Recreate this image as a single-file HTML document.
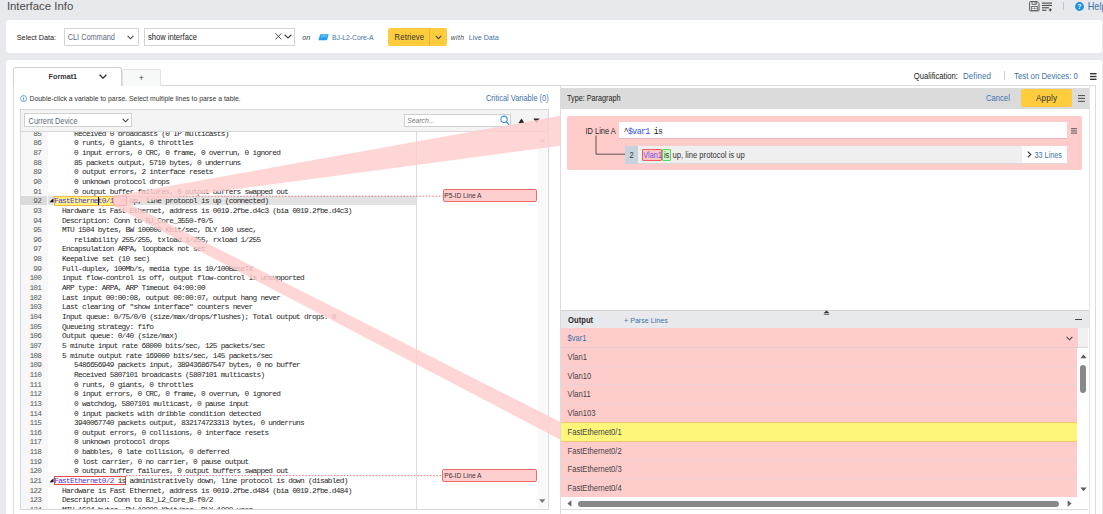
<!DOCTYPE html>
<html><head><meta charset="utf-8"><title>Interface Info</title><style>
*{box-sizing:border-box}
html,body{margin:0;padding:0}
body{width:1103px;height:514px;overflow:hidden;position:relative;background:#e8e9ed;font-family:"Liberation Sans",sans-serif;color:#333}
.a{position:absolute}
.t{position:absolute;white-space:pre;line-height:1}
.lnk{color:#3d72a8}
.mono{font-family:"Liberation Mono",monospace;font-size:7.8px;letter-spacing:-0.713px;white-space:pre;line-height:9.65px}
</style></head>
<body>
<div class="t" style="left:6.90px;top:0.78px;font-size:11.36px;letter-spacing:0.000px;color:#4a4a4a;">Interface Info</div>
<svg class="a" style="left:1028.5px;top:1px" width="11" height="10.5" viewBox="0 0 11 10.5"><path d="M1.3 0.6H8.2L10 2.4V9.2Q10 9.9 9.3 9.9H1.3Q0.6 9.9 0.6 9.2V1.3Q0.6 0.6 1.3 0.6z" fill="none" stroke="#505050" stroke-width="0.95"/><path d="M3 0.8V3.3H7.4V0.8" fill="none" stroke="#505050" stroke-width="0.8"/><rect x="5.6" y="1.3" width="0.9" height="1.3" fill="#505050"/><rect x="2.7" y="5.4" width="5.6" height="4.2" fill="#fafafa" stroke="#505050" stroke-width="0.8"/><path d="M5.5 5.6V9.6M3 7.5H8" stroke="#777" stroke-width="0.6"/></svg>
<svg class="a" style="left:1042px;top:1.5px" width="11" height="10" viewBox="0 0 11 10"><rect x="0" y="0.6" width="10" height="1.0" fill="#3a3a3a"/><rect x="0" y="2.9" width="10" height="1.0" fill="#3a3a3a"/><rect x="0" y="5.3" width="7" height="1.0" fill="#3a3a3a"/><rect x="0" y="7.7" width="4.5" height="1.0" fill="#3a3a3a"/><path d="M8.3 6.3v3.2M6.7 7.9h3.2" stroke="#3a3a3a" stroke-width="0.9"/></svg>
<div class="a" style="left:1063.20px;top:2.30px;width:0.70px;height:7.30px;background:#c4c4c4"></div>
<svg class="a" style="left:1075px;top:1.5px" width="9" height="9" viewBox="0 0 9 9"><circle cx="4.5" cy="4.5" r="4.4" fill="#1a8fe0"/><text x="4.5" y="7.3" font-size="7" font-family="Liberation Sans" font-weight="bold" fill="#fff" text-anchor="middle">?</text></svg>
<div class="t" style="left:1087.70px;top:2.51px;font-size:9.20px;letter-spacing:0.000px;color:#3d72a8;transform:scaleY(1.12);transform-origin:0 7.79px;">Help</div>
<div class="a" style="left:6.00px;top:20.00px;width:1096.00px;height:33.00px;background:#fff;border-radius:3px"></div>
<div class="t" style="left:16.80px;top:34.48px;font-size:7.23px;letter-spacing:0.000px;color:#222;transform:scaleY(1.12);transform-origin:0 6.12px;">Select Data:</div>
<div class="a" style="left:64.00px;top:28.00px;width:74.50px;height:18.00px;background:#fff;border:1px solid #d4d4d4;border-radius:1px"></div>
<div class="t" style="left:67.70px;top:34.39px;font-size:7.34px;letter-spacing:0.000px;color:#5b6b7c;transform:scaleY(1.12);transform-origin:0 6.21px;">CLI Command</div>
<svg class="a" style="left:127px;top:35px" width="7" height="5" viewBox="0 0 7 5"><path d="M0.6 0.8L3.5 3.8L6.4 0.8" fill="none" stroke="#444" stroke-width="1.1"/></svg>
<div class="a" style="left:144.40px;top:27.60px;width:150.20px;height:18.00px;background:#fff;border:1px solid #d4d4d4"></div>
<div class="t" style="left:148.00px;top:33.97px;font-size:7.60px;letter-spacing:0.000px;color:#222;transform:scaleY(1.12);transform-origin:0 6.43px;">show interface</div>
<svg class="a" style="left:275.3px;top:33.4px" width="7" height="7" viewBox="0 0 7 7"><path d="M0.5 0.4L6.3 6.4M6.3 0.4L0.5 6.4" fill="none" stroke="#333" stroke-width="0.85"/></svg>
<svg class="a" style="left:284.3px;top:34px" width="8" height="5" viewBox="0 0 8 5"><path d="M0.6 0.8L4 4L7.4 0.8" fill="none" stroke="#444" stroke-width="1.2"/></svg>
<div class="t" style="left:302.20px;top:33.71px;font-size:7.19px;letter-spacing:0.000px;color:#444;transform:scaleY(1.12);transform-origin:0 6.09px;font-style:italic">on</div>
<svg class="a" style="left:317.8px;top:34.2px" width="11" height="6.5" viewBox="0 0 11 6.5"><path d="M3 0.3H10.2Q10.9 0.3 10.6 1.1L9.2 5.4Q8.9 6.2 8.1 6.2H1Q0.2 6.2 0.5 5.4L2 1.1Q2.3 0.3 3 0.3z" fill="#27a0ea"/><path d="M3.2 1.2H9.4L8.7 3.3H2.5z" fill="#5cbcf2"/></svg>
<div class="t" style="left:332.00px;top:34.83px;font-size:6.82px;letter-spacing:0.000px;color:#3d72a8;transform:scaleY(1.12);transform-origin:0 5.77px;">BJ-L2-Core-A</div>
<div class="a" style="left:388.30px;top:27.70px;width:58.50px;height:18.10px;background:#ffcc3e;border-radius:2px"></div>
<div class="a" style="left:429.30px;top:27.70px;width:0.80px;height:18.10px;background:#e9b23a"></div>
<div class="t" style="left:394.60px;top:34.12px;font-size:7.66px;letter-spacing:0.126px;color:#333;transform:scaleY(1.12);transform-origin:0 6.48px;">Retrieve</div>
<svg class="a" style="left:434.5px;top:35px" width="7" height="5" viewBox="0 0 7 5"><path d="M0.8 0.8L3.5 3.6L6.2 0.8" fill="none" stroke="#444" stroke-width="1.1"/></svg>
<div class="t" style="left:450.80px;top:34.82px;font-size:6.83px;letter-spacing:0.352px;color:#444;transform:scaleY(1.12);transform-origin:0 5.78px;font-style:italic">with</div>
<div class="t" style="left:468.70px;top:34.57px;font-size:7.12px;letter-spacing:0.000px;color:#3d72a8;transform:scaleY(1.12);transform-origin:0 6.03px;">Live Data</div>
<div class="a" style="left:6.00px;top:60.40px;width:1096.00px;height:469.60px;background:#fff;border-radius:3px"></div>
<div class="a" style="left:13.20px;top:85.40px;width:1082.80px;height:0.80px;background:#d8d8d8"></div>
<div class="a" style="left:13.20px;top:85.40px;width:0.80px;height:444.60px;background:#dcdcdc"></div>
<div class="a" style="left:122.00px;top:69.20px;width:39.00px;height:17.00px;background:#f7f8f8;border:1px solid #e2e2e2;border-bottom:none;border-radius:2px 2px 0 0"></div>
<div class="t" style="left:138.90px;top:74.93px;font-size:8.00px;letter-spacing:0.000px;color:#333;transform:scaleY(1.12);transform-origin:0 6.77px;">+</div>
<div class="a" style="left:13.20px;top:66.90px;width:108.40px;height:19.50px;background:#fff;border:1px solid #d0d0d0;border-bottom:none;border-radius:3px 3px 0 0"></div>
<div class="t" style="left:48.60px;top:73.38px;font-size:7.22px;letter-spacing:0.000px;color:#333;transform:scaleY(1.12);transform-origin:0 6.12px;font-weight:bold">Format1</div>
<svg class="a" style="left:99px;top:73.7px" width="8" height="5" viewBox="0 0 8 5"><path d="M0.6 0.8L4 4.2L7.4 0.8" fill="none" stroke="#333" stroke-width="1.3"/></svg>
<div class="t" style="left:913.80px;top:73.33px;font-size:7.65px;letter-spacing:0.000px;color:#222;transform:scaleY(1.12);transform-origin:0 6.47px;">Qualification:</div>
<div class="t" style="left:963.00px;top:73.13px;font-size:7.88px;letter-spacing:0.140px;color:#3d72a8;transform:scaleY(1.12);transform-origin:0 6.67px;">Defined</div>
<div class="a" style="left:1004.20px;top:70.80px;width:0.80px;height:9.60px;background:#d0d0d0"></div>
<div class="t" style="left:1014.00px;top:73.17px;font-size:7.83px;letter-spacing:0.000px;color:#3d72a8;transform:scaleY(1.12);transform-origin:0 6.63px;">Test on Devices: 0</div>
<svg class="a" style="left:1089.5px;top:73px" width="7" height="7" viewBox="0 0 7 7"><rect x="0" y="0" width="6.5" height="1.4" fill="#333"/><rect x="0" y="2.8" width="6.5" height="1.4" fill="#333"/><rect x="0" y="5.6" width="6.5" height="1.4" fill="#333"/></svg>
<svg class="a" style="left:19.6px;top:94.6px" width="7.2" height="7.2" viewBox="0 0 8 8"><circle cx="4" cy="4" r="3.4" fill="none" stroke="#3a8fd6" stroke-width="0.9"/><rect x="3.55" y="3.3" width="0.9" height="2.8" fill="#3a8fd6"/><rect x="3.55" y="1.9" width="0.9" height="0.9" fill="#3a8fd6"/></svg>
<div class="t" style="left:29.50px;top:95.88px;font-size:6.87px;letter-spacing:0.000px;color:#333;transform:scaleY(1.12);transform-origin:0 5.82px;">Double-click a variable to parse. Select multiple lines to parse a table.</div>
<div class="t" style="left:486.00px;top:95.49px;font-size:7.45px;letter-spacing:0.000px;color:#3d72a8;transform:scaleY(1.12);transform-origin:0 6.31px;">Critical Variable (0)</div>
<div class="a" style="left:20.00px;top:109.00px;width:529.00px;height:401.00px;background:#fff;border:1px solid #d8d8d8"></div>
<div class="a" style="left:20.00px;top:109.00px;width:529.00px;height:23.30px;background:#f4f4f4;border:1px solid #d8d8d8"></div>
<div class="a" style="left:24.20px;top:113.20px;width:108.30px;height:14.20px;background:#fff;border:1px solid #d0d0d0"></div>
<div class="t" style="left:28.60px;top:118.39px;font-size:7.33px;letter-spacing:0.000px;color:#5b6b7c;transform:scaleY(1.12);transform-origin:0 6.21px;">Current Device</div>
<svg class="a" style="left:121.5px;top:118px" width="7" height="5" viewBox="0 0 7 5"><path d="M0.6 0.8L3.5 3.8L6.4 0.8" fill="none" stroke="#444" stroke-width="1.1"/></svg>
<div class="a" style="left:403.50px;top:113.50px;width:107.90px;height:13.90px;background:#fff;border:1px solid #d0d0d0"></div>
<div class="t" style="left:407.30px;top:117.99px;font-size:6.75px;letter-spacing:0.000px;color:#777;transform:scaleY(1.12);transform-origin:0 5.71px;font-style:italic">Search...</div>
<svg class="a" style="left:499.5px;top:114.5px" width="10" height="11" viewBox="0 0 10 11"><circle cx="4" cy="4.3" r="3.2" fill="none" stroke="#3a8fd6" stroke-width="1.1"/><path d="M6.3 6.8L9.2 9.9" stroke="#3a8fd6" stroke-width="1.3"/></svg>
<svg class="a" style="left:518px;top:117.5px" width="7" height="6" viewBox="0 0 7 6"><path d="M3.5 0.6L6.6 5.3H0.4z" fill="#222"/></svg>
<svg class="a" style="left:532.7px;top:117.5px" width="7" height="6" viewBox="0 0 7 6"><path d="M0.4 0.6H6.6L3.5 5.3z" fill="#222"/></svg>
<div class="a" style="left:21px;top:132.3px;width:526.4px;height:376.7px;overflow:hidden">
<div class="a" style="left:0;top:0;width:26.7px;height:400px;background:#f7f7f7"></div>
<div class="a" style="left:0;top:63.85px;width:25.9px;height:8.8px;background:#dadada"></div>
<div class="a" style="left:26.7px;top:63.85px;width:368.8px;height:8.8px;background:#e2e2e2"></div>
<div class="a" style="left:395px;top:0;width:1px;height:400px;background:#dcdcdc"></div>
<div class="a" style="left:516.5px;top:0;width:9.9px;height:400px;background:#f9f9f9"></div>
</div>
<div class="a" style="left:54.00px;top:195.95px;width:59.80px;height:9.65px;background:#fdf57a;border:1px solid #f2b450"></div>
<div class="a" style="left:54.20px;top:475.50px;width:71.40px;height:9.65px;border:1px solid #e8474b"></div>
<svg class="a" style="left:0;top:0" width="1103" height="514"><path d="M125 196.25H442.5M126 475.60H442.5" stroke="#ea7070" stroke-width="0.9" stroke-dasharray="1.6 1.6"/></svg>
<div class="a" style="left:21px;top:132.3px;width:526.4px;height:376.7px;overflow:hidden">
<div class="mono a" style="left:12.37px;top:-2.60px;color:#5a5a5a;-webkit-text-stroke:0">85</div>
<div class="mono a" style="left:33.20px;top:-2.60px;color:#262626">     Received 0 broadcasts (0 IP multicasts)</div>
<div class="mono a" style="left:12.37px;top:7.05px;color:#5a5a5a;-webkit-text-stroke:0">86</div>
<div class="mono a" style="left:33.20px;top:7.05px;color:#262626">     0 runts, 0 giants, 0 throttles</div>
<div class="mono a" style="left:12.37px;top:16.70px;color:#5a5a5a;-webkit-text-stroke:0">87</div>
<div class="mono a" style="left:33.20px;top:16.70px;color:#262626">     0 input errors, 0 CRC, 0 frame, 0 overrun, 0 ignored</div>
<div class="mono a" style="left:12.37px;top:26.35px;color:#5a5a5a;-webkit-text-stroke:0">88</div>
<div class="mono a" style="left:33.20px;top:26.35px;color:#262626">     85 packets output, 5710 bytes, 0 underruns</div>
<div class="mono a" style="left:12.37px;top:36.00px;color:#5a5a5a;-webkit-text-stroke:0">89</div>
<div class="mono a" style="left:33.20px;top:36.00px;color:#262626">     0 output errors, 2 interface resets</div>
<div class="mono a" style="left:12.37px;top:45.65px;color:#5a5a5a;-webkit-text-stroke:0">90</div>
<div class="mono a" style="left:33.20px;top:45.65px;color:#262626">     0 unknown protocol drops</div>
<div class="mono a" style="left:12.37px;top:55.30px;color:#5a5a5a;-webkit-text-stroke:0">91</div>
<div class="mono a" style="left:33.20px;top:55.30px;color:#262626">     0 output buffer failures, 0 output buffers swapped out</div>
<div class="mono a" style="left:12.37px;top:64.95px;color:#5a5a5a;-webkit-text-stroke:0">92</div>
<div class="mono a" style="left:33.20px;top:64.95px;color:#262626"><span style="color:#5535e0">FastEthernet0/1</span> is up, line protocol is up (connected)</div>
<svg class="a" style="left:27.80px;top:65.75px" width="5" height="5" viewBox="0 0 5 5"><path d="M4.5 0.3V4.3H0.3z" fill="#111"/></svg>
<div class="mono a" style="left:12.37px;top:74.60px;color:#5a5a5a;-webkit-text-stroke:0">93</div>
<div class="mono a" style="left:33.20px;top:74.60px;color:#262626">  Hardware is Fast Ethernet, address is 0019.2fbe.d4c3 (bia 0019.2fbe.d4c3)</div>
<div class="mono a" style="left:12.37px;top:84.25px;color:#5a5a5a;-webkit-text-stroke:0">94</div>
<div class="mono a" style="left:33.20px;top:84.25px;color:#262626">  Description: Conn to BJ_Core_3550-f0/5</div>
<div class="mono a" style="left:12.37px;top:93.90px;color:#5a5a5a;-webkit-text-stroke:0">95</div>
<div class="mono a" style="left:33.20px;top:93.90px;color:#262626">  MTU 1504 bytes, BW 100000 Kbit/sec, DLY 100 usec,</div>
<div class="mono a" style="left:12.37px;top:103.55px;color:#5a5a5a;-webkit-text-stroke:0">96</div>
<div class="mono a" style="left:33.20px;top:103.55px;color:#262626">     reliability 255/255, txload 1/255, rxload 1/255</div>
<div class="mono a" style="left:12.37px;top:113.20px;color:#5a5a5a;-webkit-text-stroke:0">97</div>
<div class="mono a" style="left:33.20px;top:113.20px;color:#262626">  Encapsulation ARPA, loopback not set</div>
<div class="mono a" style="left:12.37px;top:122.85px;color:#5a5a5a;-webkit-text-stroke:0">98</div>
<div class="mono a" style="left:33.20px;top:122.85px;color:#262626">  Keepalive set (10 sec)</div>
<div class="mono a" style="left:12.37px;top:132.50px;color:#5a5a5a;-webkit-text-stroke:0">99</div>
<div class="mono a" style="left:33.20px;top:132.50px;color:#262626">  Full-duplex, 100Mb/s, media type is 10/100BaseTX</div>
<div class="mono a" style="left:8.40px;top:142.15px;color:#5a5a5a;-webkit-text-stroke:0">100</div>
<div class="mono a" style="left:33.20px;top:142.15px;color:#262626">  input flow-control is off, output flow-control is unsupported</div>
<div class="mono a" style="left:8.40px;top:151.80px;color:#5a5a5a;-webkit-text-stroke:0">101</div>
<div class="mono a" style="left:33.20px;top:151.80px;color:#262626">  ARP type: ARPA, ARP Timeout 04:00:00</div>
<div class="mono a" style="left:8.40px;top:161.45px;color:#5a5a5a;-webkit-text-stroke:0">102</div>
<div class="mono a" style="left:33.20px;top:161.45px;color:#262626">  Last input 00:00:08, output 00:00:07, output hang never</div>
<div class="mono a" style="left:8.40px;top:171.10px;color:#5a5a5a;-webkit-text-stroke:0">103</div>
<div class="mono a" style="left:33.20px;top:171.10px;color:#262626">  Last clearing of &quot;show interface&quot; counters never</div>
<div class="mono a" style="left:8.40px;top:180.75px;color:#5a5a5a;-webkit-text-stroke:0">104</div>
<div class="mono a" style="left:33.20px;top:180.75px;color:#262626">  Input queue: 0/75/0/0 (size/max/drops/flushes); Total output drops: 0</div>
<div class="mono a" style="left:8.40px;top:190.40px;color:#5a5a5a;-webkit-text-stroke:0">105</div>
<div class="mono a" style="left:33.20px;top:190.40px;color:#262626">  Queueing strategy: fifo</div>
<div class="mono a" style="left:8.40px;top:200.05px;color:#5a5a5a;-webkit-text-stroke:0">106</div>
<div class="mono a" style="left:33.20px;top:200.05px;color:#262626">  Output queue: 0/40 (size/max)</div>
<div class="mono a" style="left:8.40px;top:209.70px;color:#5a5a5a;-webkit-text-stroke:0">107</div>
<div class="mono a" style="left:33.20px;top:209.70px;color:#262626">  5 minute input rate 68000 bits/sec, 125 packets/sec</div>
<div class="mono a" style="left:8.40px;top:219.35px;color:#5a5a5a;-webkit-text-stroke:0">108</div>
<div class="mono a" style="left:33.20px;top:219.35px;color:#262626">  5 minute output rate 169000 bits/sec, 145 packets/sec</div>
<div class="mono a" style="left:8.40px;top:229.00px;color:#5a5a5a;-webkit-text-stroke:0">109</div>
<div class="mono a" style="left:33.20px;top:229.00px;color:#262626">     5486656949 packets input, 389436867547 bytes, 0 no buffer</div>
<div class="mono a" style="left:8.40px;top:238.65px;color:#5a5a5a;-webkit-text-stroke:0">110</div>
<div class="mono a" style="left:33.20px;top:238.65px;color:#262626">     Received 5807101 broadcasts (5807101 multicasts)</div>
<div class="mono a" style="left:8.40px;top:248.30px;color:#5a5a5a;-webkit-text-stroke:0">111</div>
<div class="mono a" style="left:33.20px;top:248.30px;color:#262626">     0 runts, 0 giants, 0 throttles</div>
<div class="mono a" style="left:8.40px;top:257.95px;color:#5a5a5a;-webkit-text-stroke:0">112</div>
<div class="mono a" style="left:33.20px;top:257.95px;color:#262626">     0 input errors, 0 CRC, 0 frame, 0 overrun, 0 ignored</div>
<div class="mono a" style="left:8.40px;top:267.60px;color:#5a5a5a;-webkit-text-stroke:0">113</div>
<div class="mono a" style="left:33.20px;top:267.60px;color:#262626">     0 watchdog, 5807101 multicast, 0 pause input</div>
<div class="mono a" style="left:8.40px;top:277.25px;color:#5a5a5a;-webkit-text-stroke:0">114</div>
<div class="mono a" style="left:33.20px;top:277.25px;color:#262626">     0 input packets with dribble condition detected</div>
<div class="mono a" style="left:8.40px;top:286.90px;color:#5a5a5a;-webkit-text-stroke:0">115</div>
<div class="mono a" style="left:33.20px;top:286.90px;color:#262626">     3940067740 packets output, 832174723313 bytes, 0 underruns</div>
<div class="mono a" style="left:8.40px;top:296.55px;color:#5a5a5a;-webkit-text-stroke:0">116</div>
<div class="mono a" style="left:33.20px;top:296.55px;color:#262626">     0 output errors, 0 collisions, 0 interface resets</div>
<div class="mono a" style="left:8.40px;top:306.20px;color:#5a5a5a;-webkit-text-stroke:0">117</div>
<div class="mono a" style="left:33.20px;top:306.20px;color:#262626">     0 unknown protocol drops</div>
<div class="mono a" style="left:8.40px;top:315.85px;color:#5a5a5a;-webkit-text-stroke:0">118</div>
<div class="mono a" style="left:33.20px;top:315.85px;color:#262626">     0 babbles, 0 late collision, 0 deferred</div>
<div class="mono a" style="left:8.40px;top:325.50px;color:#5a5a5a;-webkit-text-stroke:0">119</div>
<div class="mono a" style="left:33.20px;top:325.50px;color:#262626">     0 lost carrier, 0 no carrier, 0 pause output</div>
<div class="mono a" style="left:8.40px;top:335.15px;color:#5a5a5a;-webkit-text-stroke:0">120</div>
<div class="mono a" style="left:33.20px;top:335.15px;color:#262626">     0 output buffer failures, 0 output buffers swapped out</div>
<div class="mono a" style="left:8.40px;top:344.80px;color:#5a5a5a;-webkit-text-stroke:0">121</div>
<div class="mono a" style="left:33.20px;top:344.80px;color:#262626"><span style="color:#5535e0">FastEthernet0/2</span> is administratively down, line protocol is down (disabled)</div>
<svg class="a" style="left:27.80px;top:345.60px" width="5" height="5" viewBox="0 0 5 5"><path d="M4.5 0.3V4.3H0.3z" fill="#111"/></svg>
<div class="mono a" style="left:8.40px;top:354.45px;color:#5a5a5a;-webkit-text-stroke:0">122</div>
<div class="mono a" style="left:33.20px;top:354.45px;color:#262626">  Hardware is Fast Ethernet, address is 0019.2fbe.d484 (bia 0019.2fbe.d484)</div>
<div class="mono a" style="left:8.40px;top:364.10px;color:#5a5a5a;-webkit-text-stroke:0">123</div>
<div class="mono a" style="left:33.20px;top:364.10px;color:#262626">  Description: Conn to BJ_L2_Core_B-f0/2</div>
<div class="mono a" style="left:8.40px;top:373.75px;color:#5a5a5a;-webkit-text-stroke:0">124</div>
<div class="mono a" style="left:33.20px;top:373.75px;color:#262626">  MTU 1504 bytes, BW 10000 Kbit/sec, DLY 1000 usec,</div>
</div>
<div class="a" style="left:98.00px;top:196.95px;width:1.20px;height:8.25px;background:#111"></div>
<div class="a" style="left:442.70px;top:189.40px;width:94.10px;height:12.60px;background:#ffcfcf;border:1px solid #ef6b6b;border-radius:2px"></div>
<div class="t" style="left:444.30px;top:193.18px;font-size:6.64px;letter-spacing:0.000px;color:#333;transform:scaleY(1.12);transform-origin:0 5.62px;">P5-ID Line A</div>
<div class="a" style="left:442.40px;top:469.00px;width:94.40px;height:12.80px;background:#ffcfcf;border:1px solid #ef6b6b;border-radius:2px"></div>
<div class="t" style="left:444.30px;top:472.98px;font-size:6.64px;letter-spacing:0.000px;color:#333;transform:scaleY(1.12);transform-origin:0 5.62px;">P6-ID Line A</div>
<svg class="a" style="left:539.2px;top:137.8px" width="6.5" height="4.5" viewBox="0 0 6.5 4.5"><path d="M3.25 0.3L6.3 4H0.2z" fill="#c4c4c4"/></svg>
<svg class="a" style="left:539.2px;top:498.6px" width="6.5" height="4.5" viewBox="0 0 6.5 4.5"><path d="M0.2 0.3H6.3L3.25 4z" fill="#777"/></svg>
<div class="a" style="left:560.00px;top:85.20px;width:536.00px;height:444.80px;background:#fff;border:1px solid #dcdcdc"></div>
<div class="a" style="left:1088.50px;top:85.40px;width:0.80px;height:444.60px;background:#e4e4e4"></div>
<div class="a" style="left:560.00px;top:87.80px;width:528.80px;height:21.50px;background:#dbdbdb"></div>
<div class="t" style="left:567.00px;top:95.45px;font-size:7.26px;letter-spacing:0.000px;color:#222;transform:scaleY(1.12);transform-origin:0 6.15px;">Type: Paragraph</div>
<div class="t" style="left:985.90px;top:95.47px;font-size:7.71px;letter-spacing:0.000px;color:#3d72a8;transform:scaleY(1.12);transform-origin:0 6.53px;">Cancel</div>
<div class="a" style="left:1021.00px;top:89.20px;width:50.80px;height:18.00px;background:#ffcc3e;border-radius:2px"></div>
<div class="t" style="left:1036.00px;top:95.11px;font-size:8.14px;letter-spacing:0.157px;color:#333;transform:scaleY(1.12);transform-origin:0 6.89px;">Apply</div>
<svg class="a" style="left:1077.7px;top:95.3px" width="7.5" height="7" viewBox="0 0 7.5 7"><rect x="0" y="0" width="7.3" height="1.1" fill="#555"/><rect x="0" y="2.9" width="7.3" height="1.1" fill="#555"/><rect x="0" y="5.8" width="7.3" height="1.1" fill="#555"/></svg>
<div class="a" style="left:567.00px;top:116.00px;width:515.30px;height:53.70px;background:#ffcccc;border-radius:2px"></div>
<div class="t" style="left:585.50px;top:128.10px;font-size:7.44px;letter-spacing:0.000px;color:#222;transform:scaleY(1.12);transform-origin:0 6.30px;">ID Line A</div>
<div class="a" style="left:619.40px;top:122.20px;width:447.20px;height:17.30px;background:#fff;border-bottom:1px solid #e6b8b8"></div>
<div class="t" style="left:623.8px;top:128.0px;font-family:'Liberation Mono',monospace;font-size:8.3px;letter-spacing:-0.700px;color:#222">^<span style="color:#2f4fe0">$var1</span> is</div>
<svg class="a" style="left:1070.5px;top:128.4px" width="6.5" height="6" viewBox="0 0 6.5 6"><rect x="0" y="0.1" width="6.3" height="1.2" fill="#6a6a6a"/><rect x="0" y="2.3" width="6.3" height="1.2" fill="#6a6a6a"/><rect x="0" y="4.5" width="6.3" height="1.2" fill="#6a6a6a"/></svg>
<svg class="a" style="left:595px;top:135px" width="32" height="21" viewBox="0 0 32 21"><path d="M1 0.5V19.2H31" fill="none" stroke="#2a2a2a" stroke-width="0.75"/></svg>
<div class="a" style="left:625.30px;top:145.70px;width:441.30px;height:17.90px;background:#efefef;border-bottom:1px solid #dadada"></div>
<div class="a" style="left:625.30px;top:145.70px;width:12.60px;height:17.90px;background:#c6d2dc"></div>
<div class="t" style="left:629.50px;top:152.22px;font-size:7.30px;letter-spacing:0.000px;color:#333;transform:scaleY(1.12);transform-origin:0 6.18px;">2</div>
<div class="a" style="left:641.90px;top:149.40px;width:20.40px;height:11.40px;background:#ffc4c4;border:1px solid #ee5c5c;border-radius:1px"></div>
<div class="a" style="left:662.30px;top:149.40px;width:8.70px;height:11.40px;background:#d4f2cc;border:1px solid #5ad65a;border-radius:1px"></div>
<div class="t" style="left:643.20px;top:152.22px;font-size:7.30px;letter-spacing:0.000px;color:#6a58ee;transform:scaleY(1.12);transform-origin:0 6.18px;">Vlan1</div>
<div class="t" style="left:664.00px;top:152.22px;font-size:7.30px;letter-spacing:0.000px;color:#333;transform:scaleY(1.12);transform-origin:0 6.18px;">is</div>
<div class="t" style="left:672.60px;top:151.92px;font-size:7.65px;letter-spacing:0.000px;color:#333;transform:scaleY(1.12);transform-origin:0 6.48px;">up, line protocol is up</div>
<div class="a" style="left:1021.50px;top:146.00px;width:45.10px;height:17.10px;background:#fff"></div>
<svg class="a" style="left:1026.8px;top:151.3px" width="5" height="7" viewBox="0 0 5 7"><path d="M0.8 0.6L3.8 3.5L0.8 6.4" fill="none" stroke="#333" stroke-width="1.1"/></svg>
<div class="t" style="left:1034.50px;top:152.24px;font-size:7.27px;letter-spacing:0.000px;color:#3d72a8;transform:scaleY(1.12);transform-origin:0 6.16px;">33 Lines</div>
<div class="a" style="left:561.00px;top:309.50px;width:527.50px;height:18.50px;background:#e8e9ec;border-top:1px solid #d2d2d2"></div>
<svg class="a" style="left:822.5px;top:309.5px" width="7" height="5" viewBox="0 0 7 5"><path d="M3.5 0.4L6.2 2.9H0.8z" fill="#333"/><rect x="0.8" y="3.7" width="5.4" height="0.9" fill="#333"/></svg>
<div class="t" style="left:568.10px;top:316.74px;font-size:7.63px;letter-spacing:0.000px;color:#2a2a2a;transform:scaleY(1.12);transform-origin:0 6.46px;font-weight:bold">Output</div>
<div class="t" style="left:624.00px;top:317.76px;font-size:7.13px;letter-spacing:0.000px;color:#3d72a8;transform:scaleY(1.12);transform-origin:0 6.04px;">+ Parse Lines</div>
<div class="a" style="left:1075.00px;top:318.60px;width:6.50px;height:1.20px;background:#444"></div>
<div class="a" style="left:561.00px;top:328.00px;width:516.80px;height:19.95px;background:#ffcccc"></div>
<div class="a" style="left:561.00px;top:346.95px;width:516.80px;height:1.00px;background:#e2cccc"></div>
<div class="a" style="left:1077.80px;top:328.00px;width:10.70px;height:19.95px;background:#f0f0f0;border-bottom:1px solid #dcdcdc"></div>
<div class="t" style="left:567.50px;top:335.17px;font-size:7.60px;letter-spacing:0.000px;color:#3d6ea6;transform:scaleY(1.12);transform-origin:0 6.43px;">$var1</div>
<svg class="a" style="left:1065.7px;top:336px" width="7" height="5" viewBox="0 0 7 5"><path d="M0.6 0.8L3.5 3.8L6.4 0.8" fill="none" stroke="#444" stroke-width="1.1"/></svg>
<div class="a" style="left:561.00px;top:347.95px;width:516.00px;height:17.72px;background:#ffcccc"></div>
<div class="a" style="left:561.00px;top:365.67px;width:516.00px;height:1.00px;background:#ead2d2"></div>
<div class="t" style="left:567.60px;top:353.92px;font-size:7.60px;letter-spacing:0.000px;color:#444;transform:scaleY(1.12);transform-origin:0 6.43px;">Vlan1</div>
<div class="a" style="left:561.00px;top:366.67px;width:516.00px;height:17.72px;background:#ffcccc"></div>
<div class="a" style="left:561.00px;top:384.39px;width:516.00px;height:1.00px;background:#ead2d2"></div>
<div class="t" style="left:567.60px;top:372.64px;font-size:7.60px;letter-spacing:0.000px;color:#444;transform:scaleY(1.12);transform-origin:0 6.43px;">Vlan10</div>
<div class="a" style="left:561.00px;top:385.39px;width:516.00px;height:17.72px;background:#ffcccc"></div>
<div class="a" style="left:561.00px;top:403.11px;width:516.00px;height:1.00px;background:#ead2d2"></div>
<div class="t" style="left:567.60px;top:391.36px;font-size:7.60px;letter-spacing:0.000px;color:#444;transform:scaleY(1.12);transform-origin:0 6.43px;">Vlan11</div>
<div class="a" style="left:561.00px;top:404.11px;width:516.00px;height:17.72px;background:#ffcccc"></div>
<div class="a" style="left:561.00px;top:421.83px;width:516.00px;height:1.00px;background:#ead2d2"></div>
<div class="t" style="left:567.60px;top:410.08px;font-size:7.60px;letter-spacing:0.000px;color:#444;transform:scaleY(1.12);transform-origin:0 6.43px;">Vlan103</div>
<div class="a" style="left:561.00px;top:421.83px;width:516.00px;height:19.72px;background:#fdf67a;border-top:1px solid #f2c36a;border-bottom:1px solid #f2c36a"></div>
<div class="t" style="left:567.60px;top:428.80px;font-size:7.60px;letter-spacing:0.000px;color:#444;transform:scaleY(1.12);transform-origin:0 6.43px;">FastEthernet0/1</div>
<div class="a" style="left:561.00px;top:441.55px;width:516.00px;height:17.72px;background:#ffcccc"></div>
<div class="a" style="left:561.00px;top:459.27px;width:516.00px;height:1.00px;background:#ead2d2"></div>
<div class="t" style="left:567.60px;top:447.52px;font-size:7.60px;letter-spacing:0.000px;color:#444;transform:scaleY(1.12);transform-origin:0 6.43px;">FastEthernet0/2</div>
<div class="a" style="left:561.00px;top:460.27px;width:516.00px;height:17.72px;background:#ffcccc"></div>
<div class="a" style="left:561.00px;top:477.99px;width:516.00px;height:1.00px;background:#ead2d2"></div>
<div class="t" style="left:567.60px;top:466.24px;font-size:7.60px;letter-spacing:0.000px;color:#444;transform:scaleY(1.12);transform-origin:0 6.43px;">FastEthernet0/3</div>
<div class="a" style="left:561.00px;top:478.99px;width:516.00px;height:17.72px;background:#ffcccc"></div>
<div class="a" style="left:561.00px;top:496.71px;width:516.00px;height:1.00px;background:#ead2d2"></div>
<div class="t" style="left:567.60px;top:484.96px;font-size:7.60px;letter-spacing:0.000px;color:#444;transform:scaleY(1.12);transform-origin:0 6.43px;">FastEthernet0/4</div>
<svg class="a" style="left:1080.2px;top:353.6px" width="7" height="5" viewBox="0 0 7 5"><path d="M3.5 0.4L6.6 4.2H0.4z" fill="#5a5a5a"/></svg>
<div class="a" style="left:1079.70px;top:364.90px;width:6.30px;height:28.00px;background:#888;border-radius:3px"></div>
<svg class="a" style="left:1079.7px;top:487.2px" width="7" height="5" viewBox="0 0 7 5"><path d="M0.4 0.4H6.6L3.5 4.2z" fill="#5a5a5a"/></svg>
<div class="a" style="left:561.00px;top:497.20px;width:527.00px;height:12.60px;background:#fff;border-bottom:1px solid #dcdcdc"></div>
<svg class="a" style="left:567px;top:500.3px" width="5" height="7" viewBox="0 0 5 7"><path d="M4.4 0.2V6.8L0.4 3.5z" fill="#666"/></svg>
<div class="a" style="left:578.00px;top:500.50px;width:481.00px;height:6.80px;background:#888;border-radius:3.5px"></div>
<svg class="a" style="left:1066.7px;top:500.3px" width="5" height="7" viewBox="0 0 5 7"><path d="M0.6 0.2V6.8L4.6 3.5z" fill="#666"/></svg>
<svg class="a" style="left:0;top:0" width="1103" height="514" viewBox="0 0 1103 514"><g fill="#ffcdcd" fill-opacity="0.82">
<path d="M113.6 196L560 115.8L560 145.8L113.6 205.5z"/>
<path d="M113.6 196L560 421.7L560 439.5L113.6 206z"/>
<rect x="113.8" y="196" width="12.4" height="9.6" fill-opacity="0.5" stroke="#e9a0a0" stroke-width="0.6"/>
</g></svg>
</body></html>
